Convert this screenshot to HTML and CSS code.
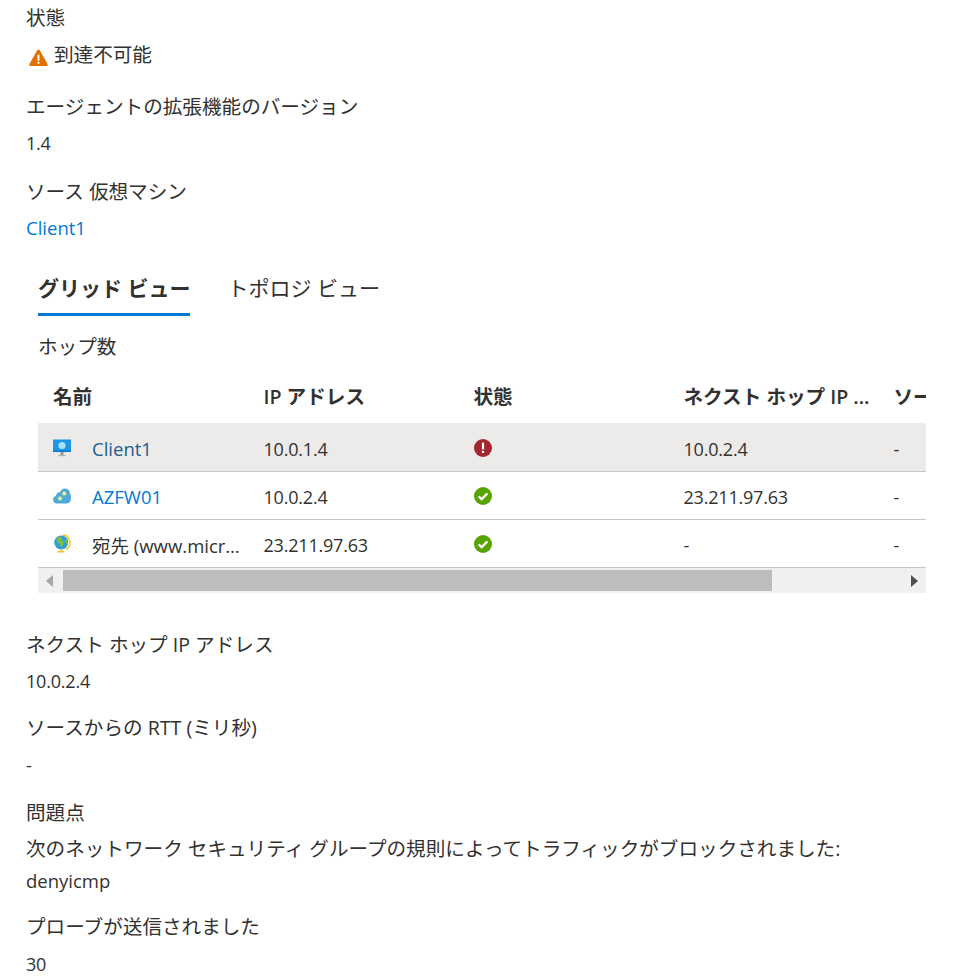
FILE: index.html
```html
<!DOCTYPE html>
<html lang="ja">
<head>
<meta charset="utf-8">
<title>接続のトラブルシューティング</title>
<link rel="stylesheet" href="styles.css">
</head>
<body>
<main class="page">
  <section class="top">
    <div class="label first">状態</div>
    <div class="value status">
      <svg class="warn" viewBox="0 0 20 18" width="19" height="17"><path d="M10 .6c.6 0 1 .3 1.3.8l8.3 14.6c.5.9-.1 1.9-1.1 1.9H1.5c-1 0-1.6-1-1.1-1.9L8.7 1.4c.3-.5.7-.8 1.3-.8z" fill="#e07000"/><rect x="9" y="6" width="2" height="6.4" fill="#fff"/><rect x="9" y="13.6" width="2" height="2" fill="#fff"/></svg>
      <span>到達不可能</span>
    </div>
    <div class="label">エージェントの拡張機能のバージョン</div>
    <div class="value num">1.4</div>
    <div class="label">ソース 仮想マシン</div>
    <div class="value latin"><a class="link" href="#">Client1</a></div>
  </section>

  <section class="panel">
    <nav class="tabs">
      <span class="tab active">グリッド ビュー</span>
      <span class="tab">トポロジ ビュー</span>
    </nav>
    <div class="hops">ホップ数</div>
    <div class="grid">
      <div class="row head">
        <div class="cell">名前</div>
        <div class="cell">IP アドレス</div>
        <div class="cell">状態</div>
        <div class="cell">ネクスト ホップ IP ...</div>
        <div class="cell">ソースからの RTT</div>
      </div>
      <div class="row body selected">
        <div class="cell name">
          <svg class="ico" viewBox="0 0 20 20" width="20" height="20"><rect x="1" y="1.5" width="18" height="12.5" fill="#1e96e6"/><rect x="1" y="12.5" width="18" height="1.5" fill="#0a78d0"/><circle cx="10" cy="7.5" r="3.6" fill="#a5e3f7"/><rect x="8.5" y="14" width="3" height="3" fill="#9a9a9a"/><rect x="6.5" y="17" width="7" height="1.2" fill="#b0b0b0"/></svg>
          <a class="rowlink dark" href="#">Client1</a>
        </div>
        <div class="cell num">10.0.1.4</div>
        <div class="cell">
          <svg class="stat" viewBox="0 0 18 18" width="18" height="18"><circle cx="9" cy="9" r="9" fill="#a4262c"/><rect x="7.9" y="3.6" width="2.2" height="6.8" fill="#fff"/><rect x="7.9" y="11.8" width="2.2" height="2.2" fill="#fff"/></svg>
        </div>
        <div class="cell num">10.0.2.4</div>
        <div class="cell num">-</div>
      </div>
      <div class="row body">
        <div class="cell name">
          <svg class="ico" viewBox="0 0 20 20" width="20" height="20"><path d="M4.8 17.5C2.6 17.5 1 15.8 1 13.8c0-1.9 1.3-3.4 3-3.7C4.2 7.6 6 6 8 6.3 8.9 4 11 2.5 13.3 2.6c2.8.1 4.7 2.3 4.6 5 .9.7 1.1 2.3 1.1 4 0 3-1.2 5.9-4 5.9z" fill="#4fa8dc"/><circle cx="8" cy="12.5" r="2.1" fill="#e3f4d8" stroke="#8ccf72" stroke-width=".9"/><circle cx="12.2" cy="7.5" r="2.1" fill="#e3f4d8" stroke="#8ccf72" stroke-width=".9"/></svg>
          <a class="rowlink" href="#">AZFW01</a>
        </div>
        <div class="cell num">10.0.2.4</div>
        <div class="cell">
          <svg class="stat" viewBox="0 0 18 18" width="18" height="18"><circle cx="9" cy="9" r="9" fill="#57a300"/><path d="M4.6 9.3l3 2.9 5.8-5.8" fill="none" stroke="#fff" stroke-width="2.3"/></svg>
        </div>
        <div class="cell num">23.211.97.63</div>
        <div class="cell num">-</div>
      </div>
      <div class="row body">
        <div class="cell name">
          <svg class="ico" viewBox="0 0 20 20" width="20" height="20"><path d="M11 .8a7.9 7.9 0 0 1 2.6 14.8" fill="none" stroke="#f5c92e" stroke-width="1.7"/><circle cx="9.2" cy="8.5" r="7" fill="#2f9fd8"/><path d="M4.8 3.8c2-1.5 4.4-1.2 5.6.2l-1 2.4 2.6 1.4-.6 3.4-2.6 1.8-1.1-3.3-2.8-1.2z" fill="#7fbd3c"/><path d="M12.6 5.2l2.8 1.4.5 2.8-2 .7z" fill="#7fbd3c"/><path d="M5 18.5h8l-1.2-1.4H6.2zM8.2 15.4h2v1.8h-2z" fill="#f2bd1c"/></svg>
          <span class="dest">宛先 (www.microsoft.com)</span>
        </div>
        <div class="cell num">23.211.97.63</div>
        <div class="cell">
          <svg class="stat" viewBox="0 0 18 18" width="18" height="18"><circle cx="9" cy="9" r="9" fill="#57a300"/><path d="M4.6 9.3l3 2.9 5.8-5.8" fill="none" stroke="#fff" stroke-width="2.3"/></svg>
        </div>
        <div class="cell num">-</div>
        <div class="cell num">-</div>
      </div>
      <div class="scrollbar">
        <span class="arrow left"></span>
        <span class="thumb"></span>
        <span class="rest"></span>
        <span class="arrow right"></span>
      </div>
    </div>
  </section>

  <section class="bottom">
    <div class="label">ネクスト ホップ IP アドレス</div>
    <div class="value num">10.0.2.4</div>
    <div class="label">ソースからの RTT (ミリ秒)</div>
    <div class="value num">-</div>
    <div class="label">問題点</div>
    <div class="value issue">次のネットワーク セキュリティ グループの規則によってトラフィックがブロックされました:<br><span class="latin">denyicmp</span></div>
    <div class="label after-issue">プローブが送信されました</div>
    <div class="value num">30</div>
  </section>
</main>
</body>
</html>
```

FILE: styles.css
```css
* { box-sizing: border-box; }
html, body { margin: 0; padding: 0; background: #fff; }
body {
  width: 972px;
  height: 980px;
  overflow: hidden;
  font-family: "Open Sans", "Noto Sans CJK JP", sans-serif;
  font-size: 19.6px;
  color: #323130;
}
.page { padding: 0 46px 0 26px; }
.label, .value { line-height: 26px; }
.label { margin-top: 22px; }
.label.first { margin-top: 5px; }
.value { margin-top: 11px; }
.value.issue { margin-top: 7px; line-height: 32px; }
.label.after-issue { margin-top: 17px; }
.num { font-size: 18px; letter-spacing: -0.2px; }
.latin { font-size: 18.5px; }
.status { display: flex; align-items: center; gap: 6px; margin-bottom: 26px; }
.status + .label { margin-top: 0; }
.warn { margin-left: 3px; margin-top: 4px; }
.link { color: #0078d4; text-decoration: none; }
.top .label:nth-child(5) { margin-top: 23px; }
.top .value:nth-child(4), .top .value:nth-child(6) { margin-top: 10px; }

.panel { margin-left: 12px; margin-top: 26px; }
.tabs { display: flex; gap: 37px; height: 49px; }
.tab { display: block; line-height: 42px; font-size: 21px; }
.tab.active { font-weight: 700; border-bottom: 3px solid #0078d4; height: 49px; }
.hops { margin-top: 18px; line-height: 26px; }

.grid { margin-top: 16px; overflow: hidden; }
.row { display: grid; grid-template-columns: 210.5px 210px 210px 210px 210px; }
.cell { padding-left: 15px; white-space: nowrap; overflow: hidden; }
.head { height: 47px; padding-bottom: 9px; align-items: center; font-weight: 600; }
.body { height: 48px; align-items: center; border-bottom: 1px solid #c8c6c4; font-size: 18.5px; }
.selected { background: #edebe9; height: 49px; }
.body .cell { padding-top: 2px; }
.selected .cell { padding-top: 3px; }
.name { display: flex; align-items: center; gap: 20px; }
.ico { flex: none; margin-top: -2px; margin-left: -1px; }
.stat { display: block; margin-top: -2px; }
.rowlink { color: #0078d4; text-decoration: none; }
.rowlink.dark { color: #1b5d8e; }
.dest { display: block; width: 150px; overflow: hidden; text-overflow: ellipsis; }

.scrollbar { display: flex; align-items: center; height: 25px; background: #f0f0f0; padding: 0 8px; }
.thumb { display: block; width: 709px; height: 21px; background: #bdbdbd; margin-left: 10px; }
.rest { flex: 1; }
.arrow { display: block; width: 0; height: 0; border-top: 6px solid transparent; border-bottom: 6px solid transparent; }
.arrow.left { border-right: 7px solid #a6a6a6; }
.arrow.right { border-left: 7px solid #505050; }

.bottom { margin-top: 39px; }
.bottom .value:nth-child(2) { margin-top: 10px; }
.bottom .label:nth-child(3) { margin-top: 21px; }
```
